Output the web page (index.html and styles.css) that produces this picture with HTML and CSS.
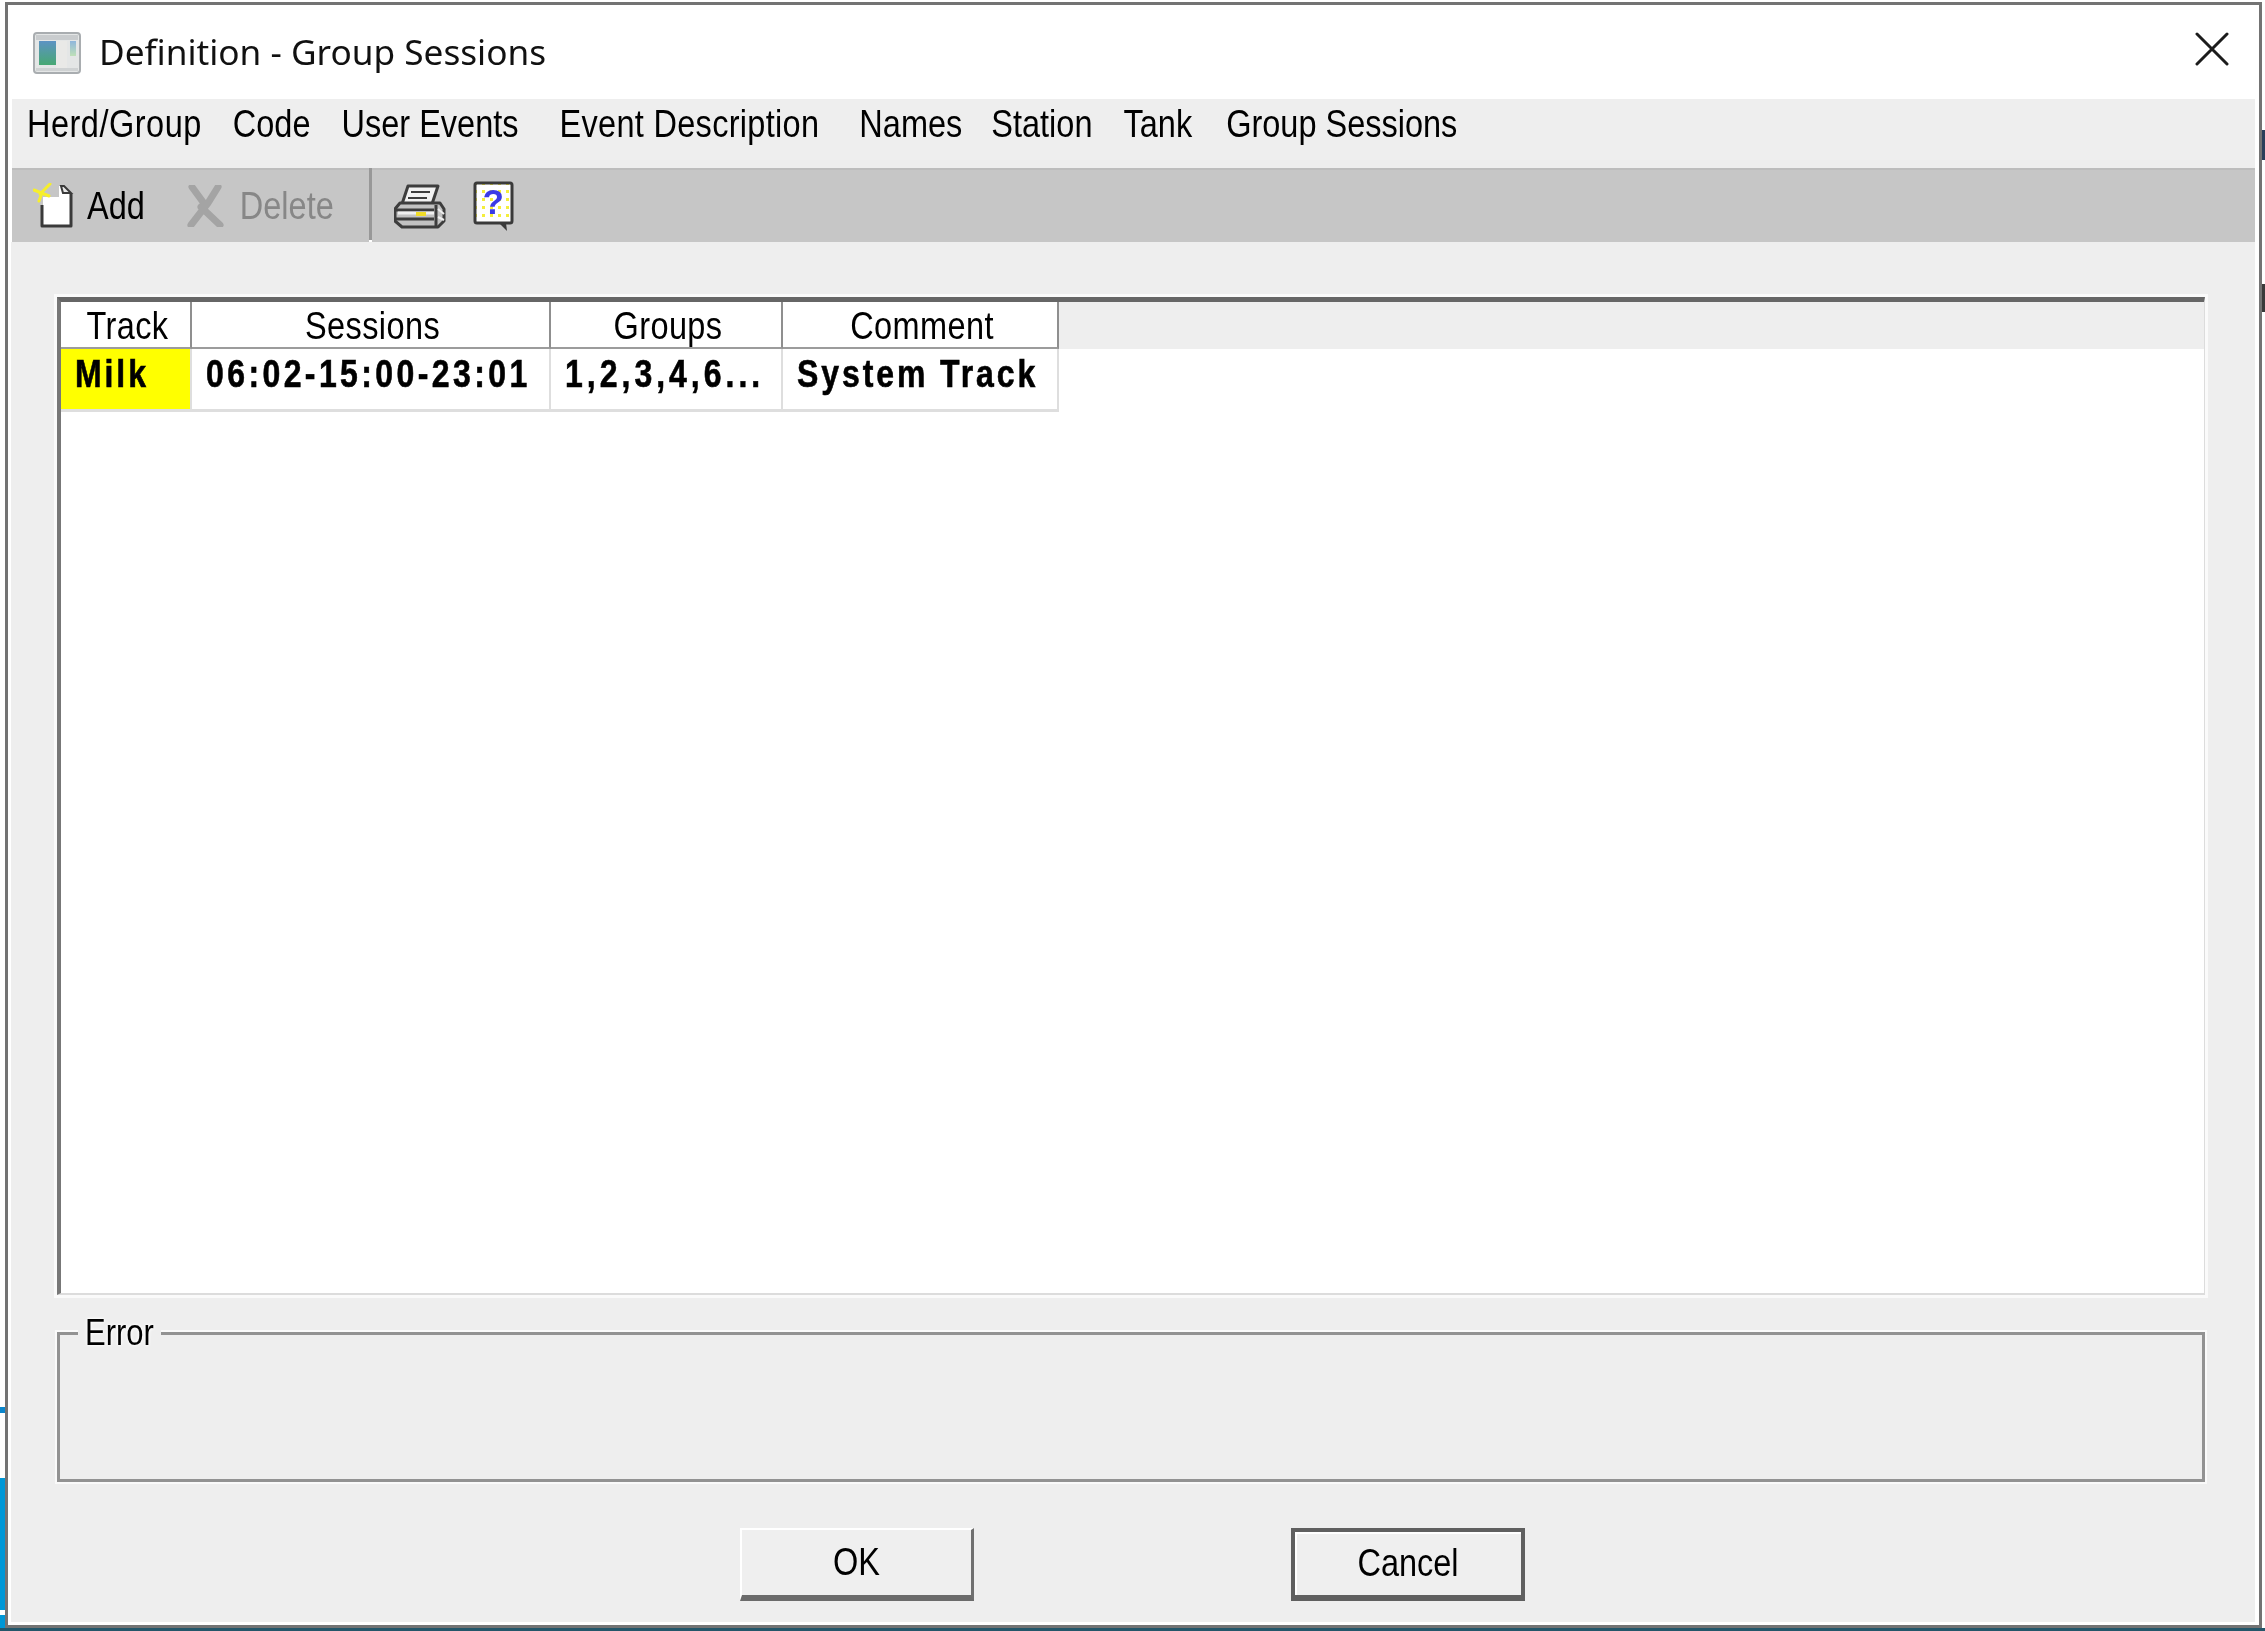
FILE: index.html
```html
<!DOCTYPE html>
<html lang="en">
<head>
<meta charset="utf-8">
<title>Definition - Group Sessions</title>
<link rel="stylesheet" href="styles.css">
</head>
<body>
<div class="desk desk-a"></div>
<div class="desk desk-b"></div>
<div class="desk desk-c"></div>
<div class="desk desk-d"></div>
<div class="desk desk-e"></div>
<div class="desk desk-f"></div>
<main class="window">
  <header class="titlebar">
    <svg class="app-icon" viewBox="0 0 48 42" aria-hidden="true">
      <defs>
        <linearGradient id="pane" x1="0" y1="0" x2="0" y2="1">
          <stop offset="0" stop-color="#5d93c4"/><stop offset="1" stop-color="#47a873"/>
        </linearGradient>
        <linearGradient id="pane2" x1="0" y1="0" x2="0" y2="1">
          <stop offset="0" stop-color="#8fb6dc"/><stop offset="1" stop-color="#bfe0b8"/>
        </linearGradient>
      </defs>
      <rect x="1" y="1" width="46" height="40" rx="3" fill="#e4e6e6" stroke="#a9adb0" stroke-width="2"/>
      <rect x="3" y="3" width="42" height="5" fill="#c9ccce"/>
      <rect x="6" y="9" width="17" height="24" fill="url(#pane)"/>
      <rect x="23" y="9" width="11" height="27" fill="#e9e9e7"/>
      <rect x="37" y="9" width="6" height="15" fill="url(#pane2)"/>
      <rect x="3" y="36" width="42" height="3" fill="#cfd2d3"/>
    </svg>
    <h1 class="title">Definition - Group Sessions</h1>
    <svg class="close" viewBox="0 0 34 34" aria-hidden="true">
      <path d="M2 2 L32 32 M32 2 L2 32" stroke="#1c1c1c" stroke-width="3" stroke-linecap="round"/>
    </svg>
  </header>

  <nav class="menu">
    <span class="tx menu-herd">Herd/Group</span>
    <span class="tx">Code</span>
    <span class="tx menu-user">User Events</span>
    <span class="tx menu-event">Event Description</span>
    <span class="tx menu-names">Names</span>
    <span class="tx">Station</span>
    <span class="tx menu-tank">Tank</span>
    <span class="tx">Group Sessions</span>
  </nav>

  <div class="toolbar">
    <div class="tool tool-add">
      <svg class="icon-add" viewBox="0 0 42 46" aria-hidden="true">
        <path d="M10 14 H37 V42 H10 Z M26 3 H31 L38 10 V14 H26 Z" fill="#fff"/>
        <path d="M9 22 V43 H38 V11" fill="none" stroke="#3a3a3a" stroke-width="3" stroke-linejoin="round"/>
        <path d="M28 3 H31 L38 10 H30 Z" fill="#e8e8e8" stroke="#3a3a3a" stroke-width="2"/>
        <path d="M1 7 L16 13 M17 1 L7 11 M6 18 L9 10" stroke="#f7ef2a" stroke-width="3" stroke-linecap="round"/>
      </svg>
      <span class="tx tool-label">Add</span>
    </div>
    <div class="tool tool-delete">
      <svg class="icon-delete" viewBox="0 0 38 42" aria-hidden="true">
        <path d="M5 2 L16 17 M31 2 L21 18 L4 40 M14 22 L33 40" stroke="#a4a4a4" stroke-width="7" stroke-linecap="round" fill="none"/>
      </svg>
      <span class="tx tool-label tool-disabled">Delete</span>
    </div>
    <div class="tool-sep"></div>
    <svg class="icon-print" viewBox="0 0 52 46" aria-hidden="true">
      <path d="M14 3 H44 L38 21 H8 Z" fill="#f2f2f2" stroke="#3d3d3d" stroke-width="3" stroke-linejoin="round"/>
      <path d="M17 9 H36 M14 15 H33" stroke="#3d3d3d" stroke-width="2"/>
      <path d="M6 20 H46 L50 26 V38 L44 44 H8 L1 38 V26 Z" fill="#c2c2c2" stroke="#3d3d3d" stroke-width="3" stroke-linejoin="round"/>
      <path d="M2 27 H40 M2 36 H40 M42 22 V43" stroke="#3d3d3d" stroke-width="3"/>
      <path d="M4 30 H40" stroke="#f0f0f0" stroke-width="3"/>
      <path d="M22 31 H32" stroke="#f0dc28" stroke-width="4"/>
      <path d="M44 26 L50 31 M44 34 L50 37" stroke="#eee" stroke-width="2"/>
    </svg>
    <div class="help">
      <svg class="help-bubble" viewBox="0 0 41 51" aria-hidden="true">
        <defs>
          <pattern id="dots" width="8" height="8" patternUnits="userSpaceOnUse">
            <rect width="8" height="8" fill="#fff"/>
            <rect x="1" y="1" width="3" height="3" fill="#f4ee3c"/>
          </pattern>
        </defs>
        <rect x="2" y="2" width="37" height="40" rx="2" fill="url(#dots)" stroke="#3a3a3a" stroke-width="3"/>
        <path d="M26 42 L34 50 L33 42 Z" fill="#3a3a3a"/>
      </svg>
      <span class="help-mark">?</span>
    </div>
  </div>

  <section class="content">
    <div class="grid">
      <div class="hcell"><span class="tx">Track</span></div>
      <div class="hcell"><span class="tx">Sessions</span></div>
      <div class="hcell"><span class="tx">Groups</span></div>
      <div class="hcell"><span class="tx">Comment</span></div>
      <div class="hfill"></div>
      <div class="cell cell-track"><span class="tx">Milk</span></div>
      <div class="cell cell-time"><span class="tx">06:02-15:00-23:01</span></div>
      <div class="cell cell-groups"><span class="tx">1,2,3,4,6...</span></div>
      <div class="cell"><span class="tx">System Track</span></div>
    </div>

    <fieldset class="errors">
      <legend class="errors-label"><span class="tx">Error</span></legend>
    </fieldset>

    <div class="actions">
      <button class="btn" type="button"><span class="tx">OK</span></button>
      <button class="btn btn-default" type="button"><span class="tx">Cancel</span></button>
    </div>
  </section>
</main>
</body>
</html>
```
FILE: styles.css
```css
* { box-sizing: border-box; }
html, body { height: 100%; }
body {
  margin: 0;
  padding: 2px 3px 0 5px;
  background: #fff;
  font-family: "Liberation Sans", sans-serif;
  font-size: 32.5px;
  color: #000;
  overflow: hidden;
  position: relative;
}

/* The reference face is tall and narrow: keep Arial advance widths, stretch the height only */
.tx { display: inline-block; transform: scaleY(1.2); white-space: nowrap; }

/* Fragments of the desktop visible behind the dialog */
.desk { position: absolute; }
.desk-a { left: 0; top: 1407px; width: 6px; height: 6px; background: #0a86cc; }
.desk-b { left: 0; top: 1478px; width: 6px; height: 132px; background: #0097d6; }
.desk-c { left: 0; top: 1615px; width: 6px; height: 16px; background: #0097d6; }
.desk-d { left: 2262px; top: 130px; width: 3px; height: 30px; background: #2a3f5a; }
.desk-e { left: 2262px; top: 284px; width: 3px; height: 28px; background: #3a3a3a; }
.desk-f { left: 0; top: 1628px; width: 2265px; height: 3px; background: #24566a; }

.window {
  position: relative;
  width: 2257px;
  height: 1626px;
  border: 3px solid #737373;
  background: #fff;
  padding: 0 4px 3px 3px;
  display: flex;
  flex-direction: column;
  filter: blur(0.6px);
}

.titlebar {
  flex: 0 0 94px;
  display: flex;
  align-items: center;
  padding-left: 22px;
}
.app-icon { width: 48px; height: 42px; flex: none; margin-top: 2px; }
.title {
  margin: -3px 0 0 18px;
  font-family: "Noto Sans", "Liberation Sans", sans-serif;
  font-weight: 400;
  font-size: 35.2px;
  flex: 1;
  color: #111;
}
.close { width: 34px; height: 34px; flex: none; margin: -7px 26px 0 0; }

.menu {
  flex: 0 0 69px;
  margin-left: 1px;
  background: #eee;
  display: flex;
  align-items: center;
  padding: 0 0 18px 15px;
  gap: 31px;
}
.menu-herd { letter-spacing: .5px; }
.menu-user { margin-right: 10px; }
.menu-event { letter-spacing: .3px; margin-right: 9px; }
.menu-names { margin-right: -2px; }
.menu-tank { margin-right: 3px; }

.toolbar {
  flex: 0 0 74px;
  margin-left: 1px;
  background: #c6c6c6;
  border-top: 2px solid #bdbdbd;
  display: flex;
  align-items: center;
}
.tool { display: flex; align-items: center; }
.tool-add { margin-left: 21px; }
.icon-add { width: 42px; height: 46px; flex: none; }
.tool-label { margin-left: 12px; }
.tool-delete { margin-left: 42px; }
.icon-delete { width: 38px; height: 42px; flex: none; }
.tool-disabled { color: #878787; margin-left: 15px; }
.tool-sep {
  align-self: stretch;
  width: 3px;
  margin: -2px 22px 0 35px;
  background: #989898;
  border-bottom: 2px solid #fff;
}
.icon-print { width: 52px; height: 46px; flex: none; }
.help { position: relative; width: 41px; height: 51px; margin-left: 27px; flex: none; }
.help-bubble { width: 41px; height: 51px; display: block; }
.help-mark {
  position: absolute;
  left: 0;
  right: 0;
  top: -2px;
  text-align: center;
  color: #3a3ae6;
  font: 700 35px/46px "Liberation Sans", sans-serif;
}

.content {
  flex: 1;
  background: #eee;
  padding: 55px 50px 0 46px;
  display: flex;
  flex-direction: column;
}

.grid {
  height: 998px;
  flex: none;
  background: #fff;
  border: solid #dcdcdc;
  border-width: 5px 1px 2px 4px;
  border-top-color: #666;
  border-left-color: #777;
  box-shadow: 0 0 0 3px #fafafa;
  display: grid;
  grid-template-columns: 131px 359px 232px 276px 1fr;
  grid-template-rows: 47px 63px;
  align-content: start;
}
.hcell {
  background: #fff;
  border-right: 2px solid #8f8f8f;
  border-bottom: 2px solid #9c9c9c;
  padding-left: 4px;
  text-align: center;
  letter-spacing: .4px;
  line-height: 49px;
}
.hfill { background: #eee; }
.cell {
  font-size: 32px;
  font-weight: 700;
  letter-spacing: 2.9px;
  -webkit-text-stroke: .5px #000;
  padding: 0 0 7px 14px;
  line-height: 50px;
  border-right: 2px solid #dedede;
  border-bottom: 3px solid #dedede;
  white-space: nowrap;
}
.cell-time { letter-spacing: 3.4px; }
.cell-groups { letter-spacing: 4px; }
.cell-track { background: #ff0; }

.errors {
  flex: none;
  margin: 23px 0 0;
  height: 164px;
  padding: 0;
  border: 3px solid #929292;
  min-width: 0;
  box-shadow: 0 0 0 2px #fafafa;
}
.errors-label {
  margin-left: 18px;
  padding: 0 7px;
  font-size: 31px;
  line-height: 30px;
  background: #eee;
  text-shadow: 0 0 3px #fff, 0 0 3px #fff;
}

.actions {
  display: flex;
  margin-top: 46px;
  padding-left: 683px;
  gap: 317px;
}
.btn {
  width: 234px;
  height: 73px;
  font: inherit;
  color: #000;
  background: #efefef;
  border: solid;
  border-width: 2px 3px 6px 2px;
  border-color: #fff #6f6f6f #6b6b6b #fff;
  padding: 0;
}
.btn-default {
  border: 4px solid #5f5f5f;
  border-bottom-width: 6px;
  box-shadow: inset 2px 2px 0 #fff;
}
```
